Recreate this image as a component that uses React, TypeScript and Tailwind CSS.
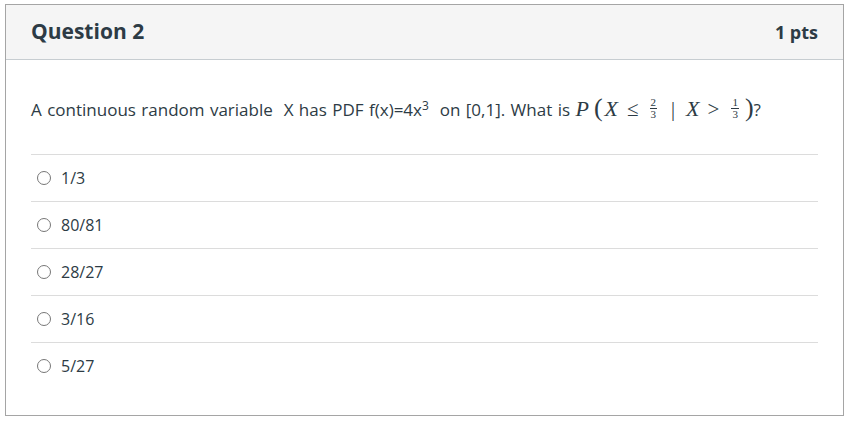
import React from "react";

const options = ["1/3", "80/81", "28/27", "3/16", "5/27"];

const serif = { fontFamily: "'Liberation Serif', 'DejaVu Serif', serif" };

function Frac({ n, d }: { n: string; d: string }) {
  return (
    <span className="inline-flex flex-col items-center align-middle mx-[4px] text-[11px] leading-[11px] not-italic -translate-y-[2px]" style={serif}>
      <span>{n}</span>
      <span className="border-t border-[#2d3b45] px-[1px]">{d}</span>
    </span>
  );
}

export default function App() {
  return (
    <div className="bg-white min-h-screen pt-[4px] pl-[5px] pr-[3px]" style={{ fontFamily: "'Open Sans', 'Noto Sans', sans-serif" }}>
      <div className="border border-[#a5a5a5] w-[839px] text-[#2d3b45]">
        <div className="flex items-center justify-between bg-[#f5f5f5] border-b border-[#c7cdd1] h-[55px] px-[25px]">
          <h2 className="text-[21px] font-bold">Question 2</h2>
          <span className="text-[18px] font-bold">1 pts</span>
        </div>
        <div className="px-[25px] pt-[36px] pb-[26px]">
          <p className="text-[17px] leading-[24px] mb-[32px] [word-spacing:1px]">
            A continuous random variable&nbsp;&nbsp;X has PDF f(x)=4x<sup className="text-[12px]">3</sup>&nbsp;&nbsp;on [0,1]. What is{" "}
            <span className="text-[22px] [word-spacing:0]" style={serif}>
              <i>P</i>
              <span className="text-[26px] ml-[5px] mr-[2px]">(</span>
              <i>X</i>
              <span className="ml-[9px] mr-[7px] text-[21px]">≤</span>
              <Frac n="2" d="3" />
              <span className="ml-[10px] mr-[11px] text-[20px]">|</span>
              <i>X</i>
              <span className="mx-[8px] text-[21px]">&gt;</span>
              <Frac n="1" d="3" />
              <span className="text-[26px] ml-[2px]">)</span>
            </span>
            ?
          </p>
          <div>
            {options.map((o) => (
              <div key={o} className="flex items-center h-[47px] border-t border-[#dcdcdc] pl-[6px]">
                <span className="w-[14px] h-[14px] rounded-full border-[1.5px] border-[#777] mr-[10px]" />
                <span className="text-[16px]">{o}</span>
              </div>
            ))}
          </div>
        </div>
      </div>
    </div>
  );
}
